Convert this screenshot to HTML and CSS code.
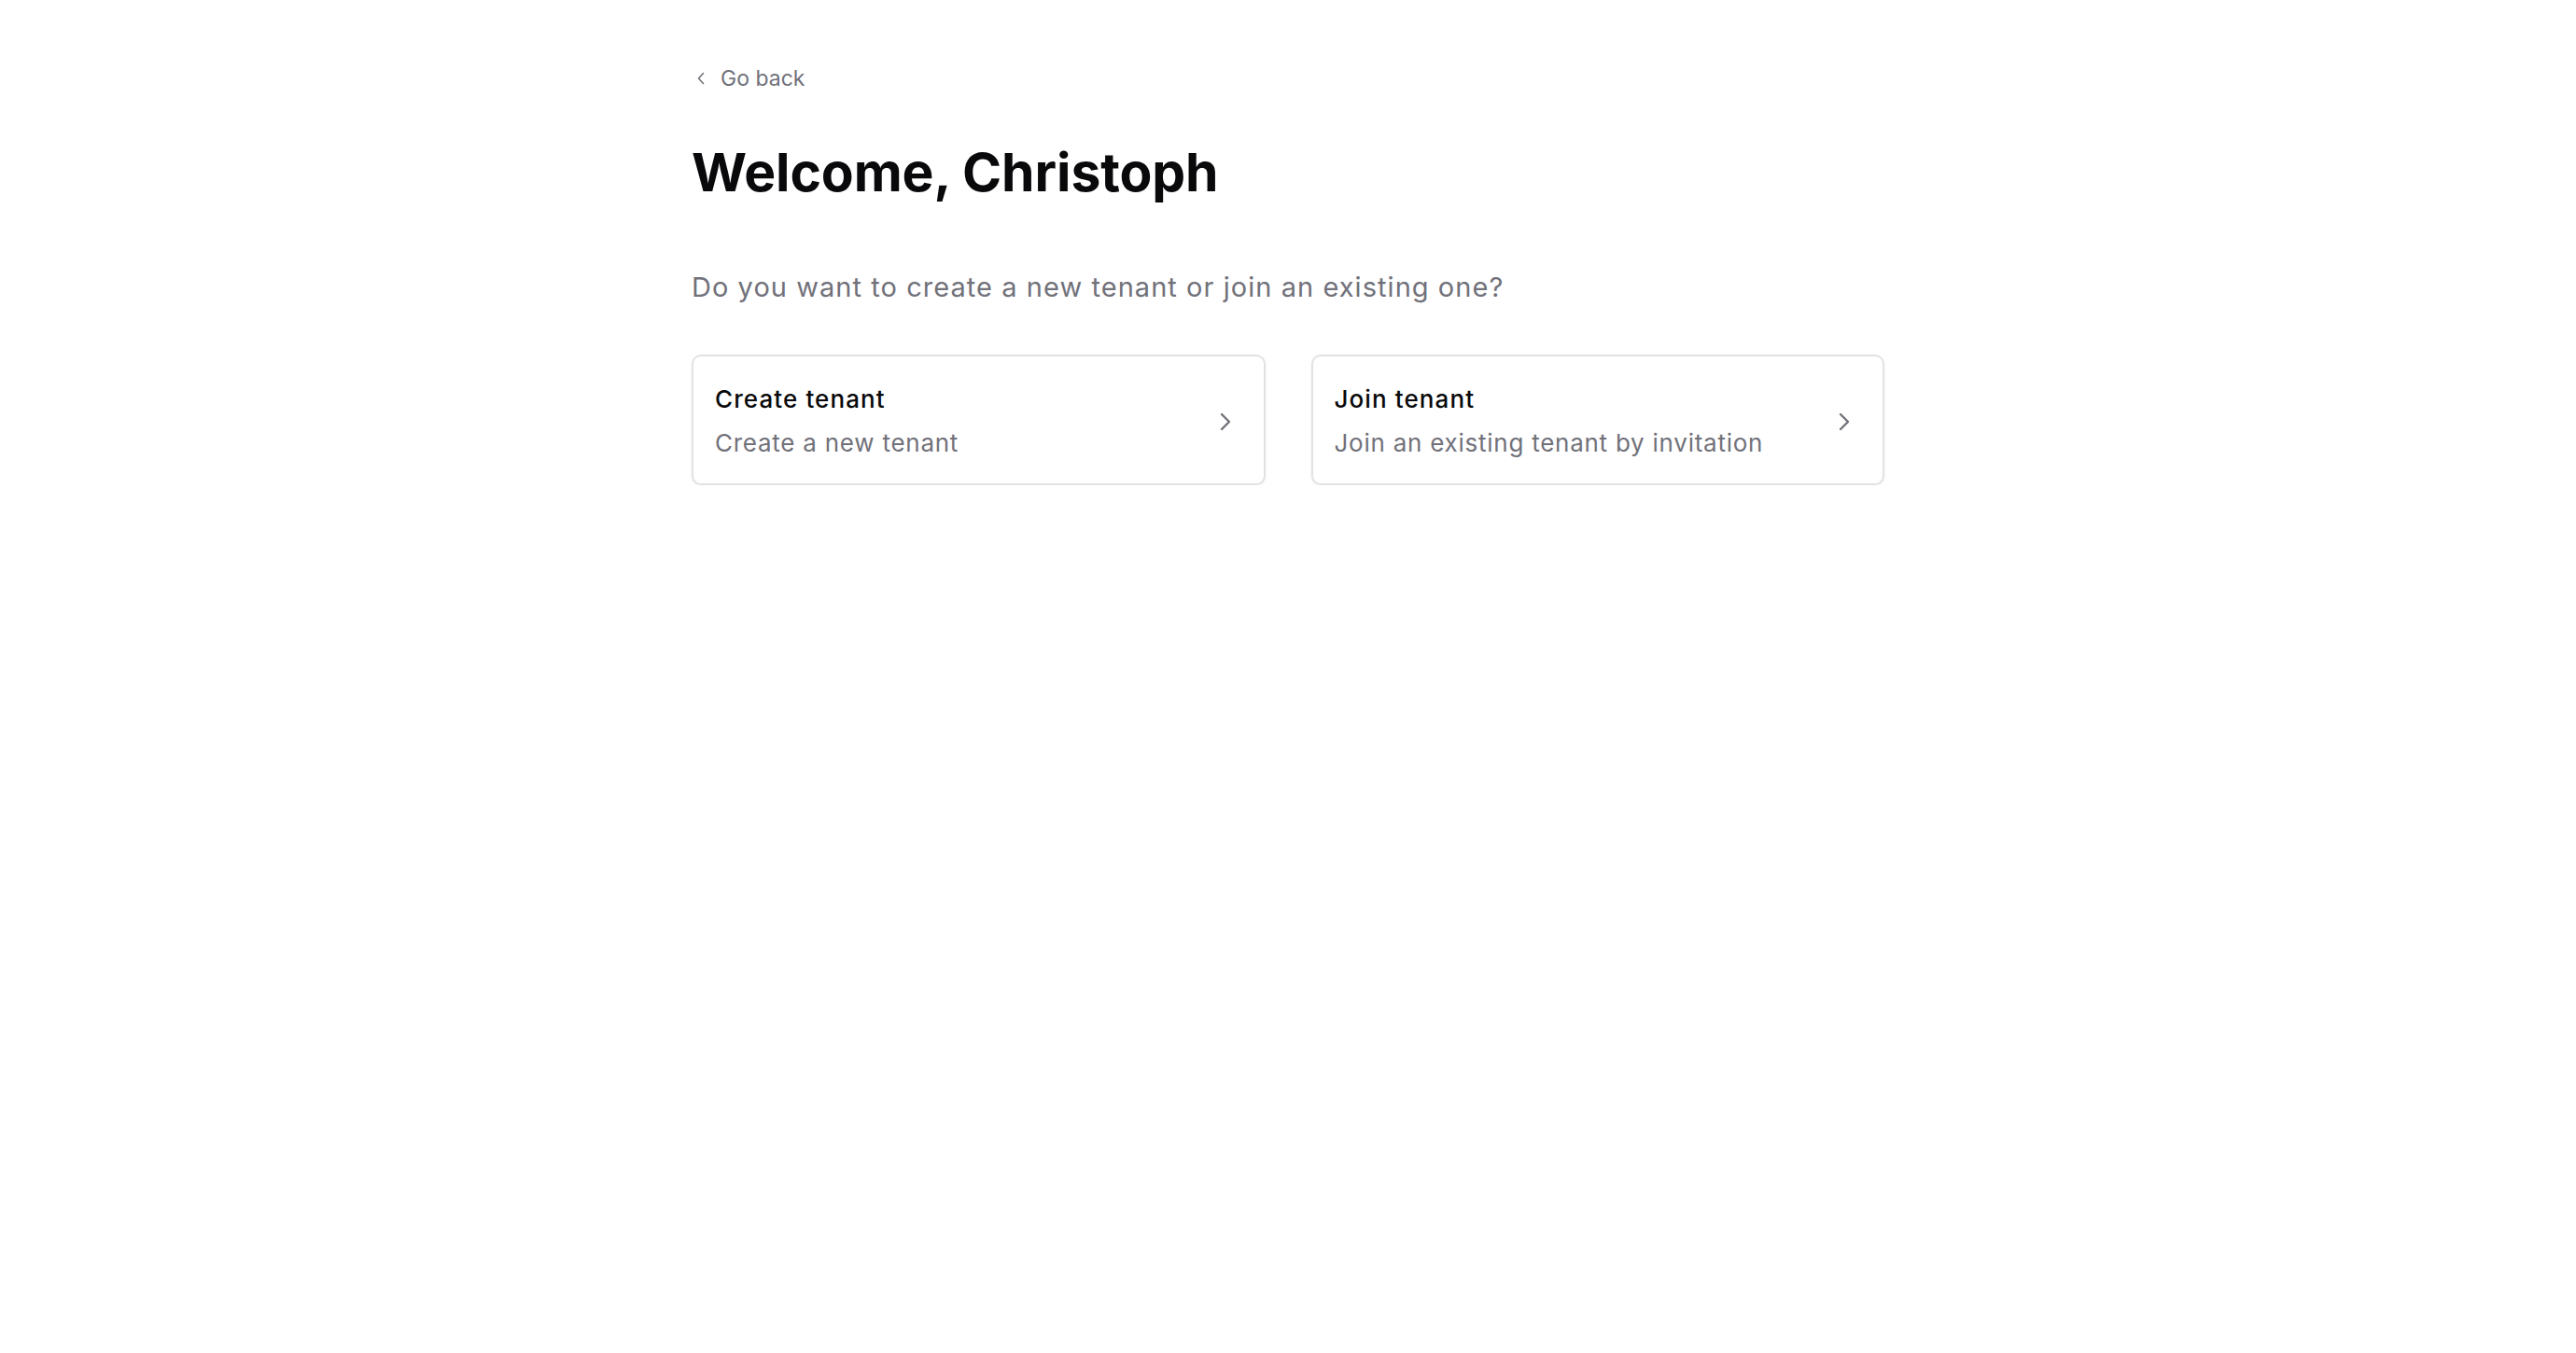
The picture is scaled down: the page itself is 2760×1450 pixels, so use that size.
FILE: index.html
```html
<!DOCTYPE html>
<html lang="en">
<head>
<meta charset="utf-8">
<title>Welcome</title>
<link rel="stylesheet" href="styles.css">
</head>
<body>
<main class="page">
  <a class="back" href="#">
    <svg class="back-icon" viewBox="0 0 8 14" width="8" height="14"><path d="M6.5 1.5 L1.5 7 L6.5 12.5" fill="none" stroke="currentColor" stroke-width="1.6" stroke-linecap="round" stroke-linejoin="round"/></svg>
    <span>Go back</span>
  </a>
  <h1 class="title">Welcome, Christoph</h1>
  <p class="subtitle">Do you want to create a new tenant or join an existing one?</p>
  <div class="options">
    <a class="card" href="#">
      <div class="card-text">
        <div class="card-title">Create tenant</div>
        <div class="card-desc">Create a new tenant</div>
      </div>
      <svg class="chev" viewBox="0 0 12 20" width="12" height="20"><path d="M2 2 L10 10 L2 18" fill="none" stroke="currentColor" stroke-width="2.4" stroke-linecap="round" stroke-linejoin="round"/></svg>
    </a>
    <a class="card" href="#">
      <div class="card-text">
        <div class="card-title">Join tenant</div>
        <div class="card-desc">Join an existing tenant by invitation</div>
      </div>
      <svg class="chev" viewBox="0 0 12 20" width="12" height="20"><path d="M2 2 L10 10 L2 18" fill="none" stroke="currentColor" stroke-width="2.4" stroke-linecap="round" stroke-linejoin="round"/></svg>
    </a>
  </div>
</main>
</body>
</html>
```
FILE: styles.css
```css
* { box-sizing: border-box; }
html, body { margin: 0; padding: 0; background: #ffffff; }
body {
  font-family: Inter, "Noto Sans", "Liberation Sans", sans-serif;
  color: #09090b;
  -webkit-font-smoothing: antialiased;
}
.page {
  width: 1278px;
  margin: 0 auto;
  padding-top: 66px;
}
.back {
  display: inline-flex;
  align-items: center;
  gap: 17px;
  color: #71717a;
  text-decoration: none;
  font-size: 23px;
  line-height: 36px;
  padding-left: 6px;
}
.back-icon { display: block; }
.title {
  margin: 49px 0 0 0;
  font-size: 57px;
  line-height: 68px;
  font-weight: 700;
  letter-spacing: -0.1px;
  color: #09090b;
}
.subtitle {
  margin: 68px 0 0 0;
  font-size: 29px;
  line-height: 42px;
  letter-spacing: 1.05px;
  color: #71717a;
}
.options {
  margin-top: 51px;
  display: grid;
  grid-template-columns: 1fr 1fr;
  gap: 49px;
}
.card {
  display: flex;
  align-items: center;
  justify-content: space-between;
  border: 2px solid #e2e2e5;
  border-radius: 10px;
  padding: 28px 35px 25px 23px;
  text-decoration: none;
  box-shadow: 0 1px 3px rgba(0,0,0,0.06);
}
.card-text { display: flex; flex-direction: column; gap: 11px; }
.card-title {
  font-size: 26px;
  line-height: 36px;
  letter-spacing: 1.1px;
  color: #09090b;
  font-weight: 500;
}
.card-desc {
  font-size: 26px;
  line-height: 36px;
  letter-spacing: 0.75px;
  color: #71717a;
}
.chev { color: #71717a; display: block; }
```
